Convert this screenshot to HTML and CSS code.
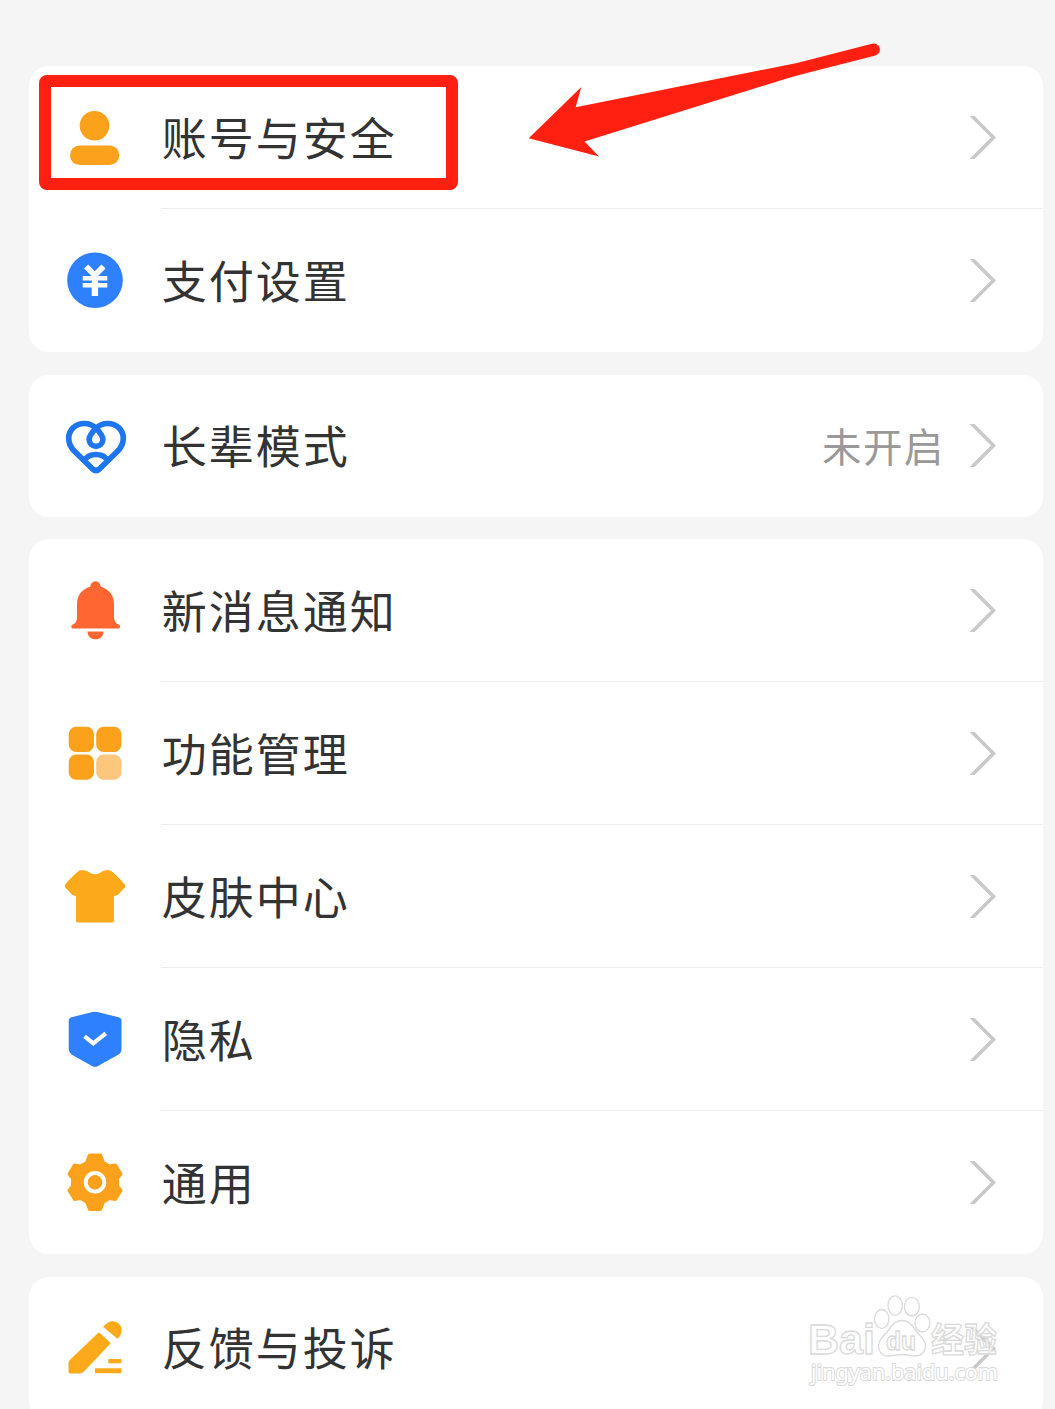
FILE: index.html
```html
<!DOCTYPE html>
<html lang="zh-CN">
<head>
<meta charset="utf-8">
<title>设置</title>
<link rel="stylesheet" href="styles.css">
</head>
<body>
<svg class="defs" width="0" height="0" aria-hidden="true">
  <symbol id="chevron" viewBox="0 0 26 43"><path d="M0 -2 L23.5 21.5 L0 45" fill="none" stroke="#c9c9c9" stroke-width="3.6"/></symbol>
</svg>
<main class="settings">
  <section class="card">
    <a class="row">
      <svg class="icon" viewBox="0 0 60 60" fill="#fca11b"><circle cx="29.5" cy="17.8" r="14.8"/><rect x="5" y="37.5" width="49.3" height="19.5" rx="9.7"/></svg>
      <span class="label">账号与安全</span>
      <svg class="chevron"><use href="#chevron"/></svg>
    </a>
    <a class="row">
      <svg class="icon" viewBox="0 0 60 60"><circle cx="30" cy="29.2" r="27.8" fill="#2f80fd"/><path d="M21.1 15.5 L29.8 24.2 L38.5 15.5" fill="none" stroke="#fff" stroke-width="5.8"/><path d="M17.7 27.2h24.6M17.7 34.2h24.6" stroke="#fff" stroke-width="4.6"/><path d="M29.9 23v22" stroke="#fff" stroke-width="6.4"/></svg>
      <span class="label">支付设置</span>
      <svg class="chevron"><use href="#chevron"/></svg>
    </a>
  </section>
  <section class="card card-single">
    <a class="row">
      <svg class="icon" viewBox="0 0 60 60" fill="none" stroke="#1f75ee" stroke-width="5.7" stroke-linejoin="round"><path d="M31 12.3 C28 9.2 24 7.5 19.5 7.5 C10 7.5 3.7 14.2 3.7 22.2 C3.7 27.5 6 31.8 9.5 35.3 L27.6 53 Q31 56 34.4 53 L52.5 35.3 C56 31.8 58.3 27.5 58.3 22.2 C58.3 14.2 52 7.5 42.5 7.5 C38 7.5 34 9.2 31 12.3 C27 16.3 24.2 19.5 24.2 23.5 a6.8 6.8 0 0 0 13.6 0 C37.8 19.5 35 16.3 31 12.3Z"/><path d="M19.5 44.5 C24 36.5 38 36.5 42.5 44.5"/></svg>
      <span class="label">长辈模式</span>
      <span class="value">未开启</span>
      <svg class="chevron"><use href="#chevron"/></svg>
    </a>
  </section>
  <section class="card">
    <a class="row">
      <svg class="icon" viewBox="0 0 60 60" fill="#ff6631"><path d="M30.5 0.3 C33.5 0.3 35.3 2.6 35.8 5.8 C44 8 49 14.5 49 23 V36 C49 40 50.5 42.5 53.7 43.4 C56 44.2 55.5 47.6 53 47.6 H8.5 C6 47.6 5.5 44.2 7.8 43.4 C10.8 42.5 12 40 12 36 V23 C12 14.5 17 8 25.2 5.8 C25.7 2.6 27.5 0.3 30.5 0.3Z"/><path d="M22.5 50.5 H38.5 C38.5 55.5 35 58.3 30.5 58.3 S22.5 55.5 22.5 50.5Z"/></svg>
      <span class="label">新消息通知</span>
      <svg class="chevron"><use href="#chevron"/></svg>
    </a>
    <a class="row">
      <svg class="icon" viewBox="0 0 60 60" fill="#fca11b"><rect x="3.7" y="2.7" width="25.3" height="25.3" rx="7.5"/><rect x="31.2" y="2.7" width="25.3" height="25.3" rx="7.5"/><rect x="3.7" y="30.5" width="25.3" height="25.3" rx="7.5"/><rect x="31.2" y="30.5" width="25.3" height="25.3" rx="7.5" fill="#fdc67d"/></svg>
      <span class="label">功能管理</span>
      <svg class="chevron"><use href="#chevron"/></svg>
    </a>
    <a class="row">
      <svg class="icon" viewBox="0 0 60 60" fill="#fcaa19"><path d="M14.5 3.6 C17 2.8 20.5 3 22.5 4.3 C25 6.2 27.5 7.2 30 7.2 S35 6.2 37.5 4.3 C39.5 3 43 2.8 45.5 3.6 C47 4.2 58 15 59.6 17.3 C60.5 18.6 60.3 19.7 59.5 20.7 L53.5 27.3 C52.5 28.5 50.5 29 49 29 V53.8 Q49 55.5 47.3 55.5 H12.7 Q11 55.5 11 53.8 V29 C9.5 29 7.5 28.5 6.5 27.3 L0.5 20.7 C-0.3 19.7 -0.5 18.6 0.4 17.3 C2 15 13 4.2 14.5 3.6Z"/></svg>
      <span class="label">皮肤中心</span>
      <svg class="chevron"><use href="#chevron"/></svg>
    </a>
    <a class="row">
      <svg class="icon" viewBox="0 0 60 60"><path d="M27.5 2 Q30 1.3 32.5 2 L53.5 7.3 Q56.5 8 56.5 11 V39 Q56.5 42.5 53.5 44.5 L33 56 Q30 57.7 27 56 L6.5 44.5 Q3.7 42.5 3.7 39 V11 Q3.7 8 6.5 7.3Z" fill="#2f80fd"/><path d="M19.5 26.3 L28.3 33.3 L40.8 23.3" fill="none" stroke="#fff" stroke-width="4.2"/></svg>
      <span class="label">隐私</span>
      <svg class="chevron"><use href="#chevron"/></svg>
    </a>
    <a class="row">
      <svg class="icon" viewBox="0 0 60 60"><path d="M24.5 2 H35.5 L38.5 9.5 L44.5 13 L50.5 12 L56 21 L52.5 25.5 V33 L56 37.5 L50.5 46.5 L44.5 45.5 L38.5 49 L35.5 56.5 H24.5 L21.5 49 L15.5 45.5 L9.5 46.5 L4 37.5 L7.5 33 V25.5 L4 21 L9.5 12 L15.5 13 L21.5 9.5Z" fill="#fca11b" stroke="#fca11b" stroke-width="3" stroke-linejoin="round"/><circle cx="30" cy="29.3" r="9.3" fill="none" stroke="#fff" stroke-width="4"/></svg>
      <span class="label">通用</span>
      <svg class="chevron"><use href="#chevron"/></svg>
    </a>
  </section>
  <section class="card">
    <a class="row">
      <svg class="icon" viewBox="0 0 60 60" fill="#fcaa19"><path d="M38.3 9 C41 5 44.5 3.2 47.5 3.2 C53 3.2 56.7 7.5 56.7 12 C56.7 15.5 55 18.5 52.5 20.7Z"/><path d="M32.8 15.2 Q34 14.2 35.2 15.2 L44.8 24.2 Q45.7 25.2 44.8 26.2 L19 53.5 Q17 55.5 14.5 55.5 H6 Q3.5 55.5 3.5 53 V45 Q3.5 43.2 5 41.7Z"/><rect x="43.2" y="41" width="13.3" height="4.3" rx="0.7"/><rect x="30" y="50.2" width="26.5" height="5" rx="0.7"/></svg>
      <span class="label">反馈与投诉</span>
      <svg class="chevron"><use href="#chevron"/></svg>
    </a>
  </section>
</main>
<div class="highlight"></div>
<svg class="arrow" viewBox="0 0 361 120"><path d="M8.7 98.2 L61.3 47 L55.7 67.3 L277 23 L352 3.7 A6.1 6.1 0 0 1 355.5 15.4 L283 34 Q272 36.8 262 40 L64.5 101.5 L79 116.5Z" fill="#ff2012"/></svg>
<svg class="watermark" viewBox="0 0 200 100">
  <g fill="#fff" stroke="#dadada" stroke-width="1.3">
    <ellipse cx="81.7" cy="29" rx="7.2" ry="9.5"/><ellipse cx="95.2" cy="15.6" rx="7.2" ry="9.7"/><ellipse cx="111.9" cy="16.7" rx="7.5" ry="9.3"/><ellipse cx="122.4" cy="33" rx="7.5" ry="9"/>
    <path d="M102 30.5 C110 30.5 113 37 117 42 C121 46.500 125.500 50 125.500 56 C125.500 62 121 66 115 66 C110 66 107 64.500 102 64.500 S93 66 88 66 C82 66 78.500 61.500 78.500 56 C78.500 50 83 46.500 87 42 C91 37 94 30.500 102 30.500Z"/>
    <text class="mark-latin" x="8" y="64" textLength="67" lengthAdjust="spacingAndGlyphs" font-size="43">Bai</text>
    <text class="mark-latin" x="86" y="60" textLength="30" lengthAdjust="spacingAndGlyphs" font-size="26">du</text>
    <text class="mark-cjk" x="131" y="61.500" textLength="66" lengthAdjust="spacingAndGlyphs" font-size="34" fill-opacity="0.700">经验</text>
    <text class="mark-url" x="11" y="89.500" textLength="187" lengthAdjust="spacingAndGlyphs" font-size="22">jingyan.baidu.com</text>
  </g>
</svg>
</body>
</html>
```
FILE: styles.css
```css
* { box-sizing: border-box; }

body {
  margin: 0;
  height: 1409px;
  position: relative;
  overflow: hidden;
  background: #f5f5f5;
  color: #333;
  font-family: "Noto Sans CJK SC", sans-serif;
}

.defs { position: absolute; }

.settings {
  display: flex;
  flex-direction: column;
  gap: 22.5px;
  padding: 66px 12px 0 29px;
}

.card {
  flex: none;
  background: #fff;
  border-radius: 20px;
  overflow: hidden;
}

.row {
  position: relative;
  display: flex;
  align-items: center;
  height: 143px;
  padding: 0 47px 0 36px;
}

.card-single .row { height: 142px; }

.row + .row::before {
  content: "";
  position: absolute;
  top: -1px;
  left: 132px;
  right: 0;
  height: 1px;
  background: #ededed;
}

.icon {
  flex: none;
  width: 60px;
  height: 60px;
  overflow: visible;
}

.label {
  flex: 1;
  margin-left: 36.7px;
  padding-bottom: 2px;
  font-size: 45px;
  letter-spacing: 2px;
  line-height: 60px;
}

.value {
  margin-right: 25.5px;
  padding-bottom: 2px;
  color: #999;
  font-size: 39.5px;
  letter-spacing: 1.3px;
  line-height: 60px;
}

.chevron {
  flex: none;
  width: 26px;
  height: 43px;
}

.highlight {
  position: absolute;
  left: 39px;
  top: 75px;
  width: 419px;
  height: 115px;
  border: 12px solid #ff2012;
  border-radius: 8px;
}

.arrow {
  position: absolute;
  left: 520px;
  top: 40px;
  width: 361px;
  height: 120px;
}

.watermark {
  position: absolute;
  left: 800px;
  top: 1290px;
  width: 200px;
  height: 100px;
}

.mark-latin {
  font-family: "Liberation Sans", sans-serif;
  font-weight: 700;
}

.mark-cjk {
  font-family: "Noto Sans CJK SC", sans-serif;
  font-weight: 700;
}

.mark-url {
  font-family: "Noto Sans", sans-serif;
  paint-order: stroke;
  stroke-width: 2px;
}
```
